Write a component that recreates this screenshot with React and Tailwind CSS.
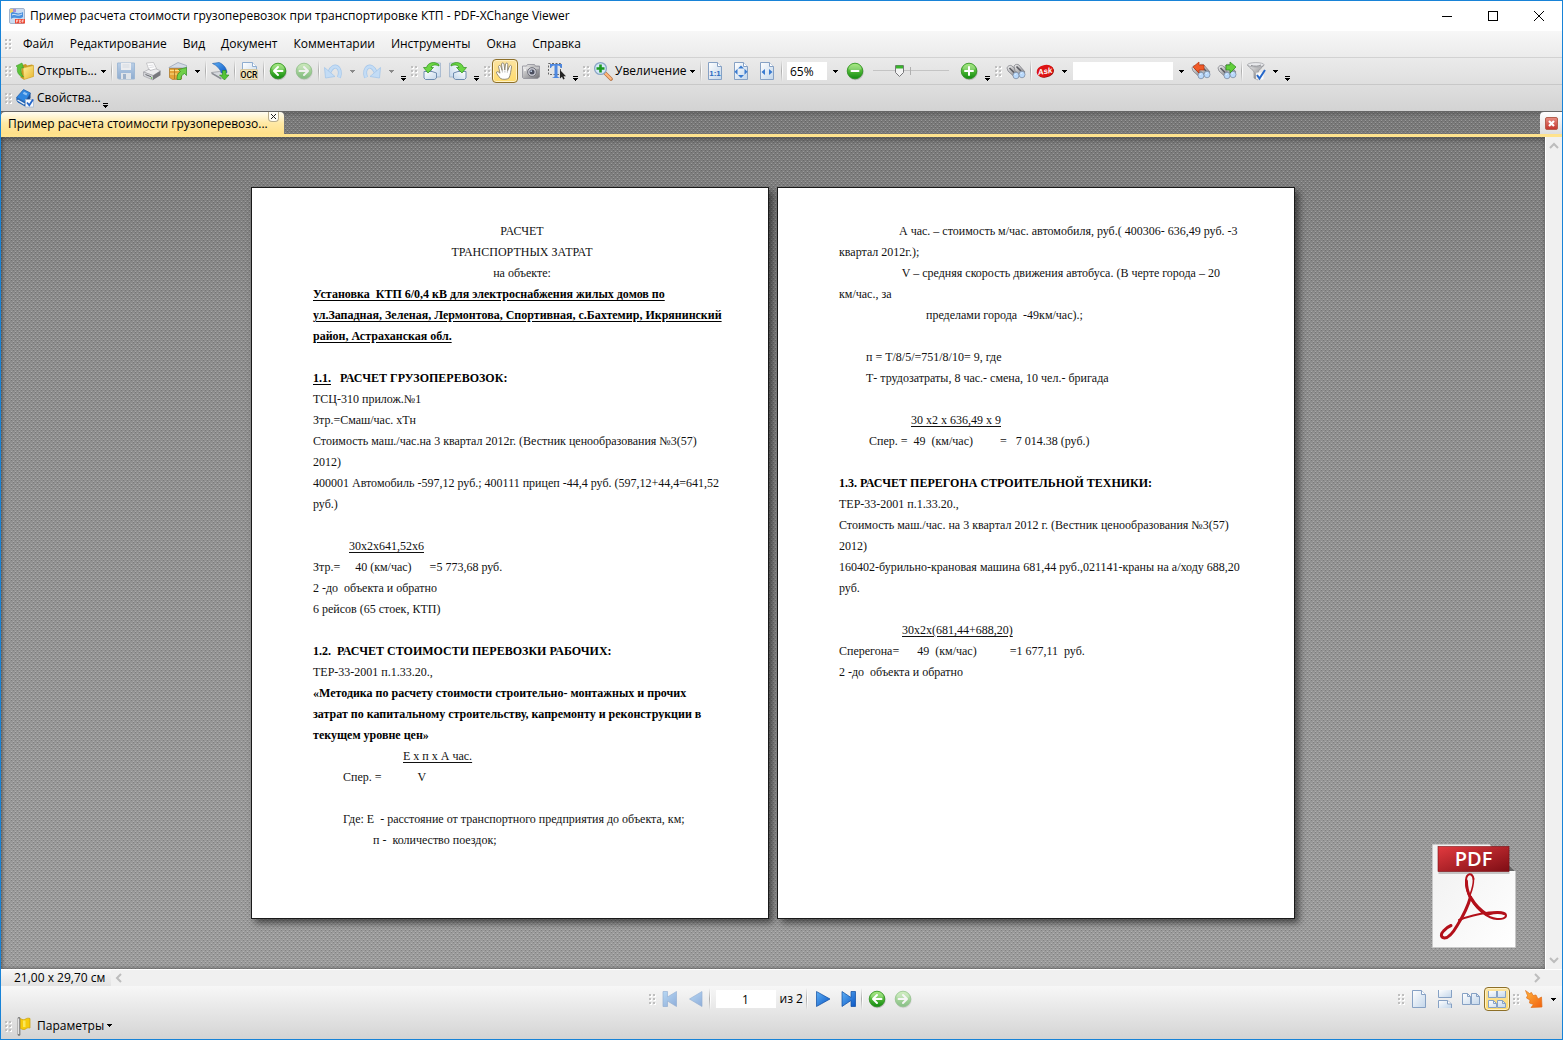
import { useState } from 'react';
import clsx from 'clsx';

const MENU = ['Файл', 'Редактирование', 'Вид', 'Документ', 'Комментарии', 'Инструменты', 'Окна', 'Справка'];

// отступы в документе набраны пробелами
const sp = (n) => ' '.repeat(n);

const PAGE_ONE = [
  { text: 'РАСЧЕТ', center: true },
  { text: 'ТРАНСПОРТНЫХ ЗАТРАТ', center: true },
  { text: 'на объекте:', center: true },
  { text: 'Установка  КТП 6/0,4 кВ для электроснабжения жилых домов по', bold: true, underline: true },
  { text: 'ул.Западная, Зеленая, Лермонтова, Спортивная, с.Бахтемир, Икрянинский', bold: true, underline: true },
  { text: 'район, Астраханская обл.', bold: true, underline: true },
  { text: '' },
  { lead: '1.1.', text: '   РАСЧЕТ ГРУЗОПЕРЕВОЗОК:', bold: true },
  { text: 'ТСЦ-310 прилож.№1' },
  { text: 'Зтр.=Смаш/час. хТн' },
  { text: 'Стоимость маш./час.на 3 квартал 2012г. (Вестник ценообразования №3(57)' },
  { text: '2012)' },
  { text: '400001 Автомобиль -597,12 руб.; 400111 прицеп -44,4 руб. (597,12+44,4=641,52' },
  { text: 'руб.)' },
  { text: '' },
  { indent: 12, text: '30х2х641,52х6', underline: true },
  { text: 'Зтр.=     40 (км/час)      =5 773,68 руб.' },
  { text: '2 -до  объекта и обратно' },
  { text: '6 рейсов (65 стоек, КТП)' },
  { text: '' },
  { text: '1.2.  РАСЧЕТ СТОИМОСТИ ПЕРЕВОЗКИ РАБОЧИХ:', bold: true },
  { text: 'ТЕР-33-2001 п.1.33.20.,' },
  { text: '«Методика по расчету стоимости строительно- монтажных и прочих', bold: true },
  { text: 'затрат по капитальному строительству, капремонту и реконструкции в', bold: true },
  { text: 'текущем уровне цен»', bold: true },
  { indent: 30, text: 'Е х п х А час.', underline: true },
  { indent: 10, text: 'Спер. =            V' },
  { text: '' },
  { indent: 10, text: 'Где: Е  - расстояние от транспортного предприятия до объекта, км;' },
  { indent: 20, text: 'п -  количество поездок;' },
];

const PAGE_TWO = [
  { indent: 20, text: 'А час. – стоимость м/час. автомобиля, руб.( 400306- 636,49 руб. -3' },
  { text: 'квартал 2012г.);' },
  { indent: 21, text: 'V – средняя скорость движения автобуса. (В черте города – 20' },
  { text: 'км/час., за' },
  { indent: 29, text: 'пределами города  -49км/час).;' },
  { text: '' },
  { indent: 9, text: 'п = Т/8/5/=751/8/10= 9, где' },
  { indent: 9, text: 'Т- трудозатраты, 8 час.- смена, 10 чел.- бригада' },
  { text: '' },
  { indent: 24, text: '30 х2 х 636,49 х 9', underline: true },
  { indent: 10, text: 'Спер. =  49  (км/час)         =   7 014.38 (руб.)' },
  { text: '' },
  { text: '1.3. РАСЧЕТ ПЕРЕГОНА СТРОИТЕЛЬНОЙ ТЕХНИКИ:', bold: true },
  { text: 'ТЕР-33-2001 п.1.33.20.,' },
  { text: 'Стоимость маш./час. на 3 квартал 2012 г. (Вестник ценообразования №3(57)' },
  { text: '2012)' },
  { text: '160402-бурильно-крановая машина 681,44 руб.,021141-краны на а/ходу 688,20' },
  { text: 'руб.' },
  { text: '' },
  { indent: 21, text: '30х2х(681,44+688,20)', underline: true },
  { text: 'Сперегона=      49  (км/час)           =1 677,11  руб.' },
  { text: '2 -до  объекта и обратно' },
];

// ─── ГРАДИЕНТЫ ДЛЯ ИКОНОК ────────────────────────────────────────────────────
const Grad = ({ id, from, to, diagonal }) => (
  <linearGradient id={id} x1="0" y1="0" x2={diagonal ? 1 : 0} y2="1">
    <stop offset="0" stopColor={from} />
    <stop offset="1" stopColor={to} />
  </linearGradient>
);

const Gradients = () => (
  <svg className="absolute size-0" aria-hidden="true">
    <defs>
      <Grad id="gGreen" from="#8ce45c" to="#118a10" />
      <Grad id="gPage" from="#ffffff" to="#c3d6ea" diagonal />
      <Grad id="gFolder" from="#fff3a0" to="#e8b52c" diagonal />
      <Grad id="gBlue" from="#5fb0f5" to="#0a56c4" diagonal />
      <Grad id="gSteel" from="#f2f2f2" to="#6f6f74" diagonal />
      <Grad id="gRed" from="#e23a3f" to="#7d0d14" diagonal />
      <Grad id="gRedBtn" from="#e88f84" to="#c4332a" />
      <Grad id="gOrange" from="#ffb43c" to="#f2600e" diagonal />
      <Grad id="gSheet" from="#f0f0f0" to="#ffffff" diagonal />
      <Grad id="gFloppy" from="#8db7e6" to="#3f79c0" />
    </defs>
  </svg>
);

const Svg = ({ children, className }) => (
  <svg viewBox="0 0 20 20" className={clsx('size-5 shrink-0', className)} aria-hidden="true">
    {children}
  </svg>
);

// ─── ИКОНКИ ──────────────────────────────────────────────────────────────────
const AppIcon = () => (
  <svg viewBox="0 0 16 16" className="size-4 shrink-0" aria-hidden="true">
    <rect x="0.5" y="0.5" width="15" height="15" rx="1.5" fill="#c9dcf2" stroke="#a3b4cc" />
    <path d="M1 1h3v4H1z" fill="#f3d36a" />
    <path d="M4 1h3v3H4z" fill="#a98bd6" />
    <path d="M2 5c3-3 5 3 12-1v5c-4 3-8-1-12 2z" fill="#4a90dd" />
    <path d="M3 7c3-2 5 2 10-1" stroke="#dcebfb" fill="none" />
    <rect x="6" y="11" width="10" height="4.500" fill="#ee4a35" />
    <path d="M7.500 14.500v-2.500h1.200v1.300H7.500M10.500 12v2.500h1l.6-1.200-.6-1.300zM13.500 14.500V12h1.500M13.500 13.200h1.200" stroke="#fff" strokeWidth="0.600" fill="none" />
  </svg>
);

const OpenIcon = () => (
  <Svg>
    <path d="M7 4l4-1 1 1.500 5-1 1.500 1v11l-10 3-3-2z" fill="#c99a22" />
    <path d="M8 7l10.500-2.500V15.500L9 18.500z" fill="url(#gFolder)" stroke="#d0a630" strokeWidth="0.6" />
    <path d="M1 5l6-3 1.500 5-2-.5C5.500 10 6 13 8.500 16 3.500 15 1.500 11 2.500 6z" fill="#5cc43a" stroke="#3a9c26" strokeWidth="0.6" />
  </Svg>
);

const SaveIcon = () => (
  <Svg className="opacity-50">
    <path d="M1.500 2h17v16h-16l-1-1z" fill="url(#gFloppy)" stroke="#5f8fc6" />
    <rect x="5" y="2" width="10" height="7" fill="#f2f5fa" />
    <path d="M6.500 4h7M6.500 6h7" stroke="#c4cfdd" />
    <rect x="5" y="12" width="10" height="6" fill="#dfe6ef" />
    <rect x="7" y="13" width="3" height="5" fill="#5b82b3" />
  </Svg>
);

const PrintIcon = () => (
  <Svg>
    <path d="M4.500 2l7-.5 3.500 7-7.500 2z" fill="#fff" stroke="#b4b4b8" strokeWidth="0.700" />
    <path d="M6.500 4.500l5-.5M7.500 6.500l5-.7" stroke="#cfcfd4" strokeWidth="0.700" />
    <path d="M1.500 11l6-3 .5 1.500 6-1.700 4.500 2-7.500 4.700z" fill="#ececee" stroke="#a2a2a8" strokeWidth="0.600" />
    <path d="M1.500 11l9.500 3.500v4.500l-9.500-4z" fill="#d3d4d8" stroke="#97979d" strokeWidth="0.600" />
    <path d="M18.500 9.800v4.500L11 19v-4.500z" fill="#77787d" />
    <path d="M3.500 13.500l5.500 2.200" stroke="#66686e" />
    <circle cx="9.500" cy="17" r="0.700" fill="#4fb52f" />
  </Svg>
);

const MailIcon = () => (
  <Svg>
    <path d="M1 6.500L10 1.500l8.500 3V7H1z" fill="#d5dbe6" stroke="#8390a6" strokeWidth="0.600" />
    <path d="M1.500 7.500h12v10.500l-9 .5-3-2z" fill="#e4a437" stroke="#a87423" strokeWidth="0.700" />
    <path d="M2 9.500h10M2 13h7" stroke="#fbe08a" />
    <path d="M6.500 8v10" stroke="#a87423" strokeWidth="0.800" />
    <path d="M9 18.500c0-4 .8-6.500 3.500-8L10.500 8.500 18.500 6.500v8L16.500 12.500c-2.500 1-3.500 3-3.500 6z" fill="#6fd048" stroke="#2f8a20" strokeWidth="0.700" />
  </Svg>
);

const ScanIcon = () => (
  <Svg>
    <path d="M1.500 11.500l8-1 7.500 4.500-6 3z" fill="#d5d8dd" stroke="#85888f" strokeWidth="0.600" />
    <path d="M1.500 11.500l9.500 5v2L1.500 13z" fill="#8a8d94" />
    <path d="M2.500 2.500L9 1.500c5 2 7.500 6 8 10l-5.500.5C10 8 7 4.500 2.500 2.500z" fill="url(#gBlue)" stroke="#1c5ba8" strokeWidth="0.600" />
    <path d="M12.500 9.500h3.500v4.500h3l-4.500 5-5-5h3z" fill="#54c435" stroke="#2a8a1b" strokeWidth="0.600" />
  </Svg>
);

const OcrIcon = () => (
  <Svg>
    <path d="M3.500 1.500h10l4 4V18h-14z" fill="url(#gPage)" stroke="#8fadd0" />
    <path d="M13.500 1.500v4h4" fill="#fff" stroke="#8fadd0" />
    <rect x="1.500" y="8.500" width="17" height="10" rx="1" fill="#f2e2b6" stroke="#d3bd8b" strokeWidth="0.700" />
    <text x="10" y="17" textAnchor="middle" fontSize="8.500" fontWeight="500" fontFamily="Roboto, sans-serif" fill="#000">OCR</text>
  </Svg>
);

const GreenDisc = ({ d, faded }) => (
  <Svg className={faded && 'opacity-45'}>
    <circle cx="10.500" cy="11" r="8.200" fill="#000" opacity="0.180" />
    <circle cx="10" cy="10" r="7.800" fill="url(#gGreen)" stroke="#2c8f1e" strokeWidth="0.800" />
    <path d="M3.500 8a6.600 6 0 0 1 13 0c-4 2-9 2-13 0z" fill="#fff" opacity="0.250" />
    <path d={d} fill="none" stroke="#fff" strokeWidth="2" strokeLinecap="round" strokeLinejoin="round" />
  </Svg>
);

const ARROW_LEFT = 'M14.500 10h-8M10 6l-4 4 4 4';
const ARROW_RIGHT = 'M5.500 10h8M10 6l4 4-4 4';

const UndoIcon = ({ flip }) => (
  <Svg className={clsx(flip && '-scale-x-100')}>
    <path d="M16 16.500C19.500 6 10.500 1 6.500 11" fill="none" stroke="#a4c6ea" strokeWidth="4" />
    <path d="M16 16.500C19.500 6 10.500 1 6.500 11" fill="none" stroke="#c3dcf5" strokeWidth="2.600" />
    <path d="M1.500 6.500l1 10.500 9.500-1.500z" fill="#c3dcf5" stroke="#a4c6ea" strokeWidth="0.800" strokeLinejoin="round" />
  </Svg>
);

const RotateIcon = ({ flip }) => (
  <Svg className={clsx(flip && '-scale-x-100')}>
    <path d="M9.500 2h9v14h-9z" fill="url(#gPage)" stroke="#9fb3ca" strokeWidth="0.800" />
    <path d="M2 10.500h8l4.500 1.500v5l-2 1.500H3.500L2 17z" fill="url(#gPage)" stroke="#6f8caf" strokeWidth="1" />
    <path d="M17 3.500C12 0 6 1.500 4.500 6.500H1.500L6 12l5.500-5.500H9C10 4 13 3 17 5z" fill="#6bd643" stroke="#2f8f20" strokeWidth="0.700" />
  </Svg>
);

const HandIcon = () => (
  <Svg>
    <path d="M5.500 17.500c-1.500-2-4.500-5-4-6.500.8-1 2.200 0 3.500 1.200L3.500 5.500c.3-1.500 2-1.300 2.400 0l1.300 4L6.500 3c.3-1.500 2.200-1.500 2.500 0l.8 6 .7-6c.5-1.400 2.200-1.200 2.300.2l-.2 6.500L14.500 5c.8-1.200 2.300-.6 2 .8-.6 4-1 8-2.500 11.200-1.500 1.500-6.500 1.800-8.500.5z" fill="#fff" stroke="#8a8371" strokeWidth="0.900" strokeLinejoin="round" />
    <path d="M7.200 9.500l.3 2M9.900 9.500v2M12.500 9.800l-.2 2" stroke="#a9a9a9" strokeWidth="0.700" />
  </Svg>
);

const CameraIcon = () => (
  <Svg>
    <path d="M1.500 5h4l1-1.500h7l1 1.500h4v11l-2 1.500h-14l-1-1z" fill="url(#gSteel)" stroke="#8f8f98" strokeWidth="0.800" />
    <path d="M2 7h16" stroke="#fff" opacity="0.600" />
    <circle cx="11" cy="11" r="4.400" fill="#c6c7d0" stroke="#73747d" />
    <circle cx="11" cy="11" r="2.500" fill="#4a4e5e" />
    <circle cx="10.200" cy="10.200" r="0.900" fill="#c3d2ea" />
    <rect x="3" y="8" width="2" height="2" fill="#eee" />
  </Svg>
);

const SelectTextIcon = () => (
  <Svg>
    <rect x="1.500" y="2.500" width="12" height="11" fill="none" stroke="#666" strokeDasharray="2 1.500" />
    <path d="M3 3h12v4h-1C13.500 5.500 12.500 4.500 10.500 4.500v10.500c0 1 .5 1.300 2 1.500v.5H5.500v-.5c1.500-.2 2-.5 2-1.500V4.500C5.500 4.500 4.500 5.500 4 7H3z" fill="#4d87df" />
    <path d="M13 9v8.500l2-1.800 1.200 2.800 1.500-.7-1.200-2.600h2.500z" fill="#222" />
  </Svg>
);

const ZoomIcon = () => (
  <Svg>
    <path d="M12 12l6 6" stroke="#b87242" strokeWidth="3.600" strokeLinecap="round" />
    <path d="M12.500 12.500l5.300 5.300" stroke="#ffb77c" strokeWidth="2.200" strokeLinecap="round" />
    <circle cx="7.500" cy="7.500" r="5.900" fill="#d5e8fa" stroke="#8aa5c4" strokeWidth="1.300" />
    <path d="M7.500 3.500v8M3.500 7.500h8" stroke="#1d9a22" strokeWidth="2.600" />
  </Svg>
);

const PageIcon = ({ children }) => (
  <Svg>
    <path d="M3.500 1.500h9l4 4v13h-13z" fill="url(#gPage)" stroke="#86a1c4" />
    <path d="M12.500 1.500v4h4" fill="#fff" stroke="#86a1c4" />
    {children}
  </Svg>
);

const ActualSizeIcon = () => (
  <PageIcon>
    <text x="10" y="14.500" textAnchor="middle" fontSize="8" fontWeight="700" fontFamily="Liberation Sans, sans-serif" fill="#2d6cc0">1:1</text>
  </PageIcon>
);

const FitPageIcon = () => (
  <PageIcon>
    <path d="M10 4.500l3 3H7zM10 17l3-3H7zM3.500 10.700l3-3v6zM16.500 10.700l-3-3v6z" fill="#3a7bd0" />
  </PageIcon>
);

const FitWidthIcon = () => (
  <PageIcon>
    <path d="M4.500 11L8 8v6zM15.500 11L12 8v6z" fill="#3a7bd0" />
  </PageIcon>
);

const BinocularsIcon = ({ arrow }) => (
  <Svg>
    {/* трубы бинокля */}
    <path d="M1 7c1-3 4-3 5-2l7 6-4 5.500L2 10z" fill="url(#gSteel)" stroke="#77787f" strokeWidth="0.700" />
    <path d="M8 5c1-2 4-2 5-1l6 7-4 4.500-6-6z" fill="url(#gSteel)" stroke="#77787f" strokeWidth="0.700" />
    <path d="M3.500 7l5 5M10.500 5.500l4.500 4.500" stroke="#5a5b62" strokeWidth="1.600" />
    <ellipse cx="10" cy="14.500" rx="3" ry="3.300" fill="#b9d9fb" stroke="#7c8ba2" strokeWidth="0.800" />
    <ellipse cx="16" cy="13.500" rx="3" ry="3.300" fill="#b9d9fb" stroke="#7c8ba2" strokeWidth="0.800" />
    <path d="M9 13.700l1-1M15 12.700l1-1" stroke="#fff" />
    {arrow === 'left' && <path d="M2 6l6-5v3h5v5H8v3z" fill="#f05a28" stroke="#b5340f" strokeWidth="0.700" />}
    {arrow === 'right' && <path d="M19 6l-6-5v3H9v5h4v3z" fill="#63cf3c" stroke="#2b8a1b" strokeWidth="0.700" />}
  </Svg>
);

const AskIcon = () => (
  <Svg>
    <ellipse cx="10.500" cy="10.500" rx="8.500" ry="6" transform="rotate(-12 10.500 10.500)" fill="#8d0606" />
    <ellipse cx="10" cy="10" rx="8.500" ry="6" transform="rotate(-12 10 10)" fill="#dd1313" />
    <text x="10" y="13" textAnchor="middle" fontSize="8" fontWeight="700" fontStyle="italic" transform="rotate(-10 10 10)" fontFamily="Liberation Sans, sans-serif" fill="#fff">Ask</text>
  </Svg>
);

const FilterIcon = () => (
  <Svg>
    <path d="M1.500 4c3 4 6 5 6.500 7v6l4 2v-8c1-2.500 4-4 6-7z" fill="url(#gSteel)" stroke="#8b8c91" strokeWidth="0.700" />
    <ellipse cx="9.800" cy="3.800" rx="8.300" ry="2.200" fill="#e8e9ec" stroke="#9b9ca1" strokeWidth="0.700" />
    <path d="M5 4.500c3 1 8 1 10-.5" stroke="#8b8c91" fill="none" />
    <rect x="10" y="11.500" width="7.500" height="7" rx="1" fill="#fff" opacity="0.850" />
    <path d="M11 14l2.500 3.500L19 9" stroke="#2466c9" strokeWidth="2" fill="none" />
  </Svg>
);

const PropertiesIcon = () => (
  <Svg>
    <path d="M8.500 1.500L15.500 5 10 14 1.500 9.500z" fill="#2f86e0" stroke="#1c5ba8" strokeWidth="0.700" />
    <path d="M9 3.800l3.500 1.700-1.200 2-3.500-1.700z" fill="#8fc2f5" />
    <path d="M1.500 9.500L10 14v4.500l-7-4c-1.500-1-2-3-1.500-5z" fill="#1c60b4" />
    <path d="M15.500 5v5L10 18.500V14z" fill="#1a4f96" />
    <path d="M2.500 12l7 4.200" stroke="#e6eef8" strokeWidth="1.400" />
    <rect x="10.500" y="11.500" width="8" height="7.500" fill="#f5f8fc" stroke="#9fb3cf" strokeWidth="0.700" />
    <path d="M12 14.500l2.300 2.800L18 11.500" stroke="#2466c9" strokeWidth="1.800" fill="none" />
  </Svg>
);

const FlagIcon = () => (
  <Svg>
    <path d="M4 2.500v16" stroke="#7d7d7d" strokeWidth="2.800" strokeLinecap="round" />
    <path d="M3.600 2.500v15.500" stroke="#e2e2e2" strokeWidth="1.200" />
    <path d="M5.500 2.500c2 1.500 3.500 1.500 5 .5 1.500-1 3-1 4.500-.5v9.500c-2-.5-3 0-4.500 1s-3 .5-5-.5z" fill="#f5cb0c" stroke="#c79c06" strokeWidth="0.700" />
    <path d="M8 4.500h2.500v6.500H8z" fill="#fbe75a" />
  </Svg>
);

const NavIcon = ({ kind, faded }) => (
  <Svg className={faded && 'opacity-40'}>
    {kind === 'first' && <path d="M3 2.500h4.500v5.500L16.500 2.500v15L7.500 12v5.500H3z" fill="url(#gBlue)" stroke="#1557ae" strokeWidth="0.700" />}
    {kind === 'prev' && <path d="M16 2.500v15L3.500 10z" fill="url(#gBlue)" stroke="#1557ae" strokeWidth="0.700" />}
    {kind === 'next' && <path d="M4.500 2.500v15L18 10z" fill="url(#gBlue)" stroke="#0b4aa0" strokeWidth="0.700" />}
    {kind === 'last' && <path d="M4 2.500L13 8.500v-6h4.500v15H13v-6l-9 6z" fill="url(#gBlue)" stroke="#0b4aa0" strokeWidth="0.700" />}
  </Svg>
);

const ContinuousIcon = () => (
  <Svg>
    <path d="M3.500 1v7.500h13V1" fill="url(#gPage)" stroke="#86a1c4" />
    <path d="M3.500 19v-7.500h9l4 3.500v4" fill="url(#gPage)" stroke="#86a1c4" />
    <path d="M12.500 11.500v3.500h4" fill="#fff" stroke="#86a1c4" />
  </Svg>
);

const FacingIcon = () => (
  <Svg>
    <path d="M1.500 4.500h5l3 3v8h-8zM10.500 4.500h5l3 3v8h-8z" fill="url(#gPage)" stroke="#86a1c4" />
    <path d="M6.500 4.500v3h3M15.500 4.500v3h3" fill="none" stroke="#86a1c4" />
  </Svg>
);

const FacingContinuousIcon = () => (
  <Svg>
    <path d="M1.500 2v6.500h8V2M10.500 2v6.500h8V2" fill="url(#gPage)" stroke="#86a1c4" />
    <path d="M1.500 18.500v-7h5l3 3v4zM10.500 18.500v-7h5l3 3v4z" fill="url(#gPage)" stroke="#86a1c4" />
    <path d="M6.500 11.500v3h3M15.500 11.500v3h3" fill="none" stroke="#86a1c4" />
  </Svg>
);

const LaunchIcon = () => (
  <Svg>
    <path d="M1.500 1.500l4 3 2-1 1.500 3 3-.5 2 4 3.500-2 .5 10-11 .5 2.500-3-4-1.500.5-3-3.500-2 1-2.500z" fill="url(#gOrange)" stroke="#e0701a" strokeWidth="0.700" strokeLinejoin="round" />
  </Svg>
);

// ─── ЭЛЕМЕНТЫ ПАНЕЛЕЙ ────────────────────────────────────────────────────────
const Grip = () => (
  <svg viewBox="0 0 11 12" className="w-[11px] h-3 shrink-0" shapeRendering="crispEdges" aria-hidden="true">
    {[1, 5, 9].map((y) => (
      <g key={y}>
        <rect x="4" y={y + 1} width="2" height="2" fill="#fff" />
        <rect x="8" y={y + 1} width="2" height="2" fill="#fff" />
        <rect x="3" y={y} width="2" height="2" fill="#bfbfbf" />
        <rect x="7" y={y} width="2" height="2" fill="#bfbfbf" />
      </g>
    ))}
  </svg>
);

const Separator = () => (
  <div className="w-[3px] self-stretch flex justify-center shrink-0">
    <div className="w-px my-0.5 bg-linear-to-b from-transparent via-[#adadad] to-transparent" />
    <div className="w-px my-0.5 bg-linear-to-b from-transparent via-white to-transparent" />
  </div>
);

const IconButton = ({ label, active, disabled, children }) => (
  <button
    type="button"
    title={label}
    aria-label={label}
    disabled={disabled}
    className={clsx(
      'w-[26px] h-6 flex items-center justify-center shrink-0',
      active && 'rounded-sm border border-[#8d6f28] bg-linear-to-b from-[#fbe3a0] to-[#ffdb6b] shadow-[inset_0_0_0_1px_#fff1c4]'
    )}
  >
    {children}
  </button>
);

const DropArrow = ({ label, faded }) => (
  <button type="button" aria-label={label} className="w-[13px] h-6 flex items-center justify-center shrink-0">
    <svg viewBox="0 0 5 3" className="w-[5px] h-[3px]" shapeRendering="crispEdges" aria-hidden="true">
      <path d="M0 0h5v1H4v1H3v1H2V2H1V1H0z" fill={faded ? '#8a8a8a' : '#000'} />
    </svg>
  </button>
);

const Overflow = () => (
  <button type="button" aria-label="Параметры панели" className="w-2.5 self-stretch flex items-end justify-center pb-[3px] shrink-0">
    <svg viewBox="0 0 5 5" className="size-[5px]" shapeRendering="crispEdges" aria-hidden="true">
      <path d="M0 0h5v1H0zM0 2h5v1H4v1H3v1H2V4H1V3H0z" fill="#000" />
    </svg>
  </button>
);

const LabelButton = ({ icon, children, className }) => (
  <button type="button" className={clsx('h-6 flex items-center gap-0.5 pl-0.5 shrink-0 whitespace-nowrap text-left', className)}>
    {icon}
    {children}
  </button>
);

const Chevron = ({ d }) => (
  <svg viewBox="0 0 10 10" className="size-2.5" aria-hidden="true">
    <path d={d} fill="none" stroke="#bdbdbd" strokeWidth="2" />
  </svg>
);

// ─── ВЕРХ ОКНА ───────────────────────────────────────────────────────────────
const TitleBar = () => (
  <header className="h-[30px] flex items-center bg-white pl-2">
    <AppIcon />
    <h1 className="ml-[5px] flex-1 whitespace-nowrap">
      Пример расчета стоимости грузоперевозок при транспортировке КТП - PDF-XChange Viewer
    </h1>
    <button type="button" aria-label="Свернуть" className="w-[46px] h-full flex items-center justify-center">
      <span className="w-2.5 h-px bg-black" />
    </button>
    <button type="button" aria-label="Развернуть" className="w-[46px] h-full flex items-center justify-center">
      <span className="size-2.5 border border-black" />
    </button>
    <button type="button" aria-label="Закрыть" className="w-[46px] h-full flex items-center justify-center">
      <svg viewBox="0 0 10 10" className="size-2.5" aria-hidden="true">
        <path d="M0 0l10 10M10 0L0 10" stroke="#000" />
      </svg>
    </button>
  </header>
);

const MenuBar = () => (
  <nav className="h-[26px] flex items-center pl-px">
    <Grip />
    {MENU.map((item) => (
      <button key={item} type="button" className="h-full px-2 first-of-type:ml-0.5">{item}</button>
    ))}
  </nav>
);

const MainToolbar = () => {
  const [zoom, setZoom] = useState('65%');
  const [query, setQuery] = useState('');
  const [level, setLevel] = useState(30);

  return (
    <div className="h-[27px] flex items-center pl-px border-t border-[#d2d2d2]">
      <Grip />
      <LabelButton icon={<OpenIcon />} className="w-[84px]">Открыть...</LabelButton>
      <DropArrow label="Недавние файлы" />
      <Separator />
      <IconButton label="Сохранить" disabled><SaveIcon /></IconButton>
      <IconButton label="Печать"><PrintIcon /></IconButton>
      <IconButton label="Отправить по почте"><MailIcon /></IconButton>
      <DropArrow label="Варианты отправки" />
      <Separator />
      <IconButton label="Сканировать"><ScanIcon /></IconButton>
      <Separator />
      <IconButton label="Распознать текст"><OcrIcon /></IconButton>
      <Separator />
      <IconButton label="Назад"><GreenDisc d={ARROW_LEFT} /></IconButton>
      <IconButton label="Вперёд" disabled><GreenDisc d={ARROW_RIGHT} faded /></IconButton>
      <Separator />
      <IconButton label="Отменить" disabled><UndoIcon /></IconButton>
      <DropArrow label="История отмен" faded />
      <IconButton label="Вернуть" disabled><UndoIcon flip /></IconButton>
      <DropArrow label="История возвратов" faded />
      <Overflow />
      <Grip />
      <IconButton label="Повернуть влево"><RotateIcon /></IconButton>
      <IconButton label="Повернуть вправо"><RotateIcon flip /></IconButton>
      <Overflow />
      <Grip />
      <IconButton label="Рука" active><HandIcon /></IconButton>
      <IconButton label="Снимок"><CameraIcon /></IconButton>
      <IconButton label="Выделение текста"><SelectTextIcon /></IconButton>
      <Overflow />
      <Grip />
      <LabelButton icon={<ZoomIcon />} className="w-[95px]">Увеличение</LabelButton>
      <DropArrow label="Инструменты масштаба" />
      <Separator />
      <IconButton label="Реальный размер"><ActualSizeIcon /></IconButton>
      <IconButton label="Страница целиком"><FitPageIcon /></IconButton>
      <IconButton label="По ширине"><FitWidthIcon /></IconButton>
      <Separator />
      <input
        aria-label="Масштаб"
        value={zoom}
        onChange={(e) => setZoom(e.target.value)}
        className="ml-1 mr-0.5 w-10 h-[18px] bg-white px-[3px] shrink-0 outline-none"
      />
      <DropArrow label="Список масштабов" />
      <IconButton label="Уменьшить"><GreenDisc d="M6.500 10h7" /></IconButton>
      <div className="relative w-[88px] h-4 shrink-0">
        <svg viewBox="0 0 88 16" className="w-full h-4" aria-hidden="true">
          <path d="M5 7.500h76" stroke="#c4c4c4" />
          <path d="M42.500 4v8" stroke="#b0b0b0" />
          <path d="M27.500 2.500h8v7l-4 4-4-4z" fill="#f3f3f3" stroke="#77777a" />
          <path d="M28 2.500h7v3h-7z" fill="#39b52c" />
        </svg>
        <input
          type="range"
          aria-label="Ползунок масштаба"
          value={level}
          onChange={(e) => setLevel(e.target.value)}
          className="absolute inset-0 w-full opacity-0"
        />
      </div>
      <IconButton label="Увеличить"><GreenDisc d="M6 10h8M10 6v8" /></IconButton>
      <Overflow />
      <Grip />
      <IconButton label="Поиск"><BinocularsIcon /></IconButton>
      <Separator />
      <IconButton label="Ask.com"><AskIcon /></IconButton>
      <DropArrow label="Поисковые системы" />
      <input
        aria-label="Строка поиска"
        value={query}
        onChange={(e) => setQuery(e.target.value)}
        className="mx-0.5 w-[100px] h-[18px] bg-white px-[3px] shrink-0 outline-none"
      />
      <DropArrow label="История поиска" />
      <IconButton label="Найти предыдущее"><BinocularsIcon arrow="left" /></IconButton>
      <IconButton label="Найти следующее"><BinocularsIcon arrow="right" /></IconButton>
      <Separator />
      <IconButton label="Фильтр поиска"><FilterIcon /></IconButton>
      <DropArrow label="Параметры фильтра" />
      <Overflow />
    </div>
  );
};

const PropertiesBar = () => (
  <div className="h-[27px] flex items-center pl-px border-t border-[#c8c8c8]">
    <Grip />
    <LabelButton icon={<PropertiesIcon />} className="w-[87px]">Свойства...</LabelButton>
    <Overflow />
  </div>
);

// узор рабочей области: светлые и тёмные точки в шахматном порядке
const DOTS =
  'bg-[conic-gradient(from_270deg_at_1px_1px,rgba(255,255,255,0.22)_25%,transparent_0),conic-gradient(from_270deg_at_1px_1px,rgba(255,255,255,0.22)_25%,transparent_0),conic-gradient(from_270deg_at_1px_1px,rgba(0,0,0,0.16)_25%,transparent_0),conic-gradient(from_270deg_at_1px_1px,rgba(0,0,0,0.16)_25%,transparent_0)] bg-size-[4px_4px] bg-position-[0_0,2px_2px,0_1px,2px_3px]';

const TabStrip = () => (
  <div className="bg-[#7a7a7a]">
    <div className={clsx('h-[23px] flex items-end justify-between border-t border-[#666] shadow-[inset_0_3px_3px_rgba(0,0,0,0.15)]', DOTS)}>
      <div className="h-full w-[283px] flex items-start justify-between pl-[7px] pr-[5px] rounded-t-sm bg-linear-to-b from-[#fffdf2] via-[#ffe9a5] to-[#ffe088]">
        <button type="button" className="h-full pt-0.5 whitespace-nowrap">Пример расчета стоимости грузоперевозо...</button>
        <button type="button" aria-label="Закрыть вкладку" className="w-[13px] h-[10px] flex items-center justify-center rounded-b-sm border border-t-0 border-[#b9ad8c] bg-[#fffdf5]">
          <svg viewBox="0 0 7 7" className="size-[7px]" aria-hidden="true">
            <path d="M1 1l5 5M6 1L1 6" stroke="#222" />
          </svg>
        </button>
      </div>
      <div className="h-full w-[22px] flex items-center justify-center bg-linear-to-b from-white to-[#dedede] rounded-tl-sm">
        <button type="button" aria-label="Закрыть документ" className="size-[13px]">
          <svg viewBox="0 0 13 13" className="size-[13px]" aria-hidden="true">
            <rect x="0.500" y="0.500" width="12" height="12" rx="1.500" fill="url(#gRedBtn)" stroke="#b5604e" />
            <path d="M4 4l5 5M9 4l-5 5" stroke="#fff" strokeWidth="2.200" />
          </svg>
        </button>
      </div>
    </div>
    <div className="h-[3px] bg-[#ffe38d]" />
  </div>
);

// ─── ДОКУМЕНТ ────────────────────────────────────────────────────────────────
const Page = ({ lines }) => (
  <article className="w-[518px] min-h-[732px] shrink-0 border border-[#1a1a1a] bg-white pt-[33px] pl-[61px] pr-[37px] shadow-[4px_4px_7px_rgba(0,0,0,0.55)] font-['Liberation_Serif',serif] text-[12px] leading-[21px] text-[#111]">
    {lines.map((line, i) => (
      <p
        key={i}
        className={clsx(
          'min-h-[21px] whitespace-pre',
          line.center && 'text-center',
          line.bold && 'font-bold text-black'
        )}
      >
        {line.indent && sp(line.indent)}
        {line.lead && <span className="underline underline-offset-2">{line.lead}</span>}
        <span className={clsx(line.underline && 'underline underline-offset-2')}>{line.text}</span>
      </p>
    ))}
  </article>
);

const PdfBadge = () => (
  <svg viewBox="0 0 84 104" className="absolute right-[29px] bottom-[21px] w-[84px] h-[104px]" role="img" aria-label="PDF">
    <path d="M0.500 0.500h57l26 27v76h-83z" fill="url(#gSheet)" stroke="#c9c9c9" />
    <path d="M76 20l7 7h-7z" fill="#666" />
    <rect x="6.500" y="4" width="71" height="26" fill="#000" opacity="0.200" />
    <rect x="6" y="2.500" width="71" height="25" fill="url(#gRed)" stroke="#7d1014" strokeWidth="0.600" />
    <text x="41.500" y="22" textAnchor="middle" fontSize="20" fontWeight="600" fontFamily="Open Sans, sans-serif" fill="#fff">PDF</text>
    <g fill="none" stroke="#b3101a" strokeLinecap="round" strokeLinejoin="round">
      <path d="M41.500 35c-1-7-7-6-7.500 1-.5 8 1.500 13 5 19 7 12 17 19 26 20 5 .5 9-1 9-3.500 0-4-8-4-17-3-11 1.500-21 4-30 7.500" strokeWidth="2" />
      <path d="M38 51c2-5 3.500-11 3.500-16" strokeWidth="1.600" />
      <path d="M38.500 53c-3 11-8 20-13 28-4 7-9 13-13 13-4-.5-4-4-1-7 2-2.500 5-4.500 7.500-5.500" strokeWidth="3" />
      <path d="M39 54c4 7 9 12 16 16.500" strokeWidth="3.200" />
      <path d="M34.500 37c0 7 2 13 4 17" strokeWidth="2.800" />
      <path d="M57 70c7-2 12-1.500 16 0" strokeWidth="2.600" />
    </g>
  </svg>
);

const Workspace = () => (
  <main className="flex-1 flex bg-[#f0f0f0]">
    <div className="relative flex-1 bg-linear-to-b from-[#7a7a7a] via-[#8c8c8c] via-20% to-[#9c9c9c]">
      <div className={clsx('min-h-full flex items-start justify-center gap-2 py-[50px] shadow-[inset_0_3px_5px_rgba(0,0,0,0.3),inset_2px_-2px_3px_rgba(0,0,0,0.2)]', DOTS)}>
        <Page lines={PAGE_ONE} />
        <Page lines={PAGE_TWO} />
      </div>
      <PdfBadge />
    </div>
    <div className="w-[17px] flex flex-col items-center justify-between py-1 border-l border-white">
      <button type="button" aria-label="Прокрутить вверх"><Chevron d="M1 7l4-4 4 4" /></button>
      <button type="button" aria-label="Прокрутить вниз"><Chevron d="M1 3l4 4 4-4" /></button>
    </div>
  </main>
);

// ─── НИЗ ОКНА ────────────────────────────────────────────────────────────────
const StatusRow = () => (
  <div className="h-[17px] flex items-center bg-[#f0f0f0] border-t border-white">
    <div className="w-[110px] h-full flex items-center pl-[13px] bg-linear-to-b from-[#f6f6f6] to-[#e2e2e2] whitespace-nowrap">21,00 x 29,70 см</div>
    <div className="flex-1 flex items-center justify-between pl-[3px] pr-5">
      <button type="button" aria-label="Прокрутить влево"><Chevron d="M7 1L3 5l4 4" /></button>
      <button type="button" aria-label="Прокрутить вправо"><Chevron d="M3 1l4 4-4 4" /></button>
    </div>
  </div>
);

const PageNav = () => {
  const [page, setPage] = useState('1');

  return (
    <div className="h-[26px] grid grid-cols-[1fr_auto_1fr] items-center">
      <div />
      <div className="h-full flex items-center pr-0.5">
        <Grip />
        <IconButton label="Первая страница" disabled><NavIcon kind="first" faded /></IconButton>
        <IconButton label="Предыдущая страница" disabled><NavIcon kind="prev" faded /></IconButton>
        <Separator />
        <input
          aria-label="Номер страницы"
          value={page}
          onChange={(e) => setPage(e.target.value)}
          className="mx-1 w-[60px] h-[18px] bg-white text-center outline-none"
        />
        <span className="w-[26px] whitespace-nowrap">из 2</span>
        <Separator />
        <IconButton label="Следующая страница"><NavIcon kind="next" /></IconButton>
        <IconButton label="Последняя страница"><NavIcon kind="last" /></IconButton>
        <Separator />
        <IconButton label="Предыдущий вид"><GreenDisc d={ARROW_LEFT} /></IconButton>
        <IconButton label="Следующий вид" disabled><GreenDisc d={ARROW_RIGHT} faded /></IconButton>
      </div>
      <div className="h-full flex items-center justify-end pr-0.5">
        <Grip />
        <IconButton label="Одна страница"><PageIcon /></IconButton>
        <IconButton label="Непрерывно"><ContinuousIcon /></IconButton>
        <IconButton label="Разворот"><FacingIcon /></IconButton>
        <IconButton label="Непрерывный разворот" active><FacingContinuousIcon /></IconButton>
        <Grip />
        <IconButton label="Запуск"><LaunchIcon /></IconButton>
        <DropArrow label="Варианты запуска" />
      </div>
    </div>
  );
};

const OptionsRow = () => (
  <div className="h-[27px] flex items-center pl-px">
    <Grip />
    <LabelButton icon={<FlagIcon />} className="w-[90px]">Параметры</LabelButton>
    <DropArrow label="Меню параметров" />
  </div>
);

const App = () => (
  <div className="min-h-screen flex flex-col border border-[#1883d7] bg-white font-['Open_Sans','Noto_Sans',sans-serif] text-[12px] leading-4 text-black">
    <Gradients />
    <TitleBar />
    <div className="bg-linear-to-b from-[#f7f7f7] to-[#d3d3d3]">
      <MenuBar />
      <MainToolbar />
      <PropertiesBar />
    </div>
    <TabStrip />
    <Workspace />
    <StatusRow />
    <div className="bg-linear-to-b from-[#f7f7f7] to-[#d4d4d4]">
      <PageNav />
      <OptionsRow />
    </div>
  </div>
);

export default App;
